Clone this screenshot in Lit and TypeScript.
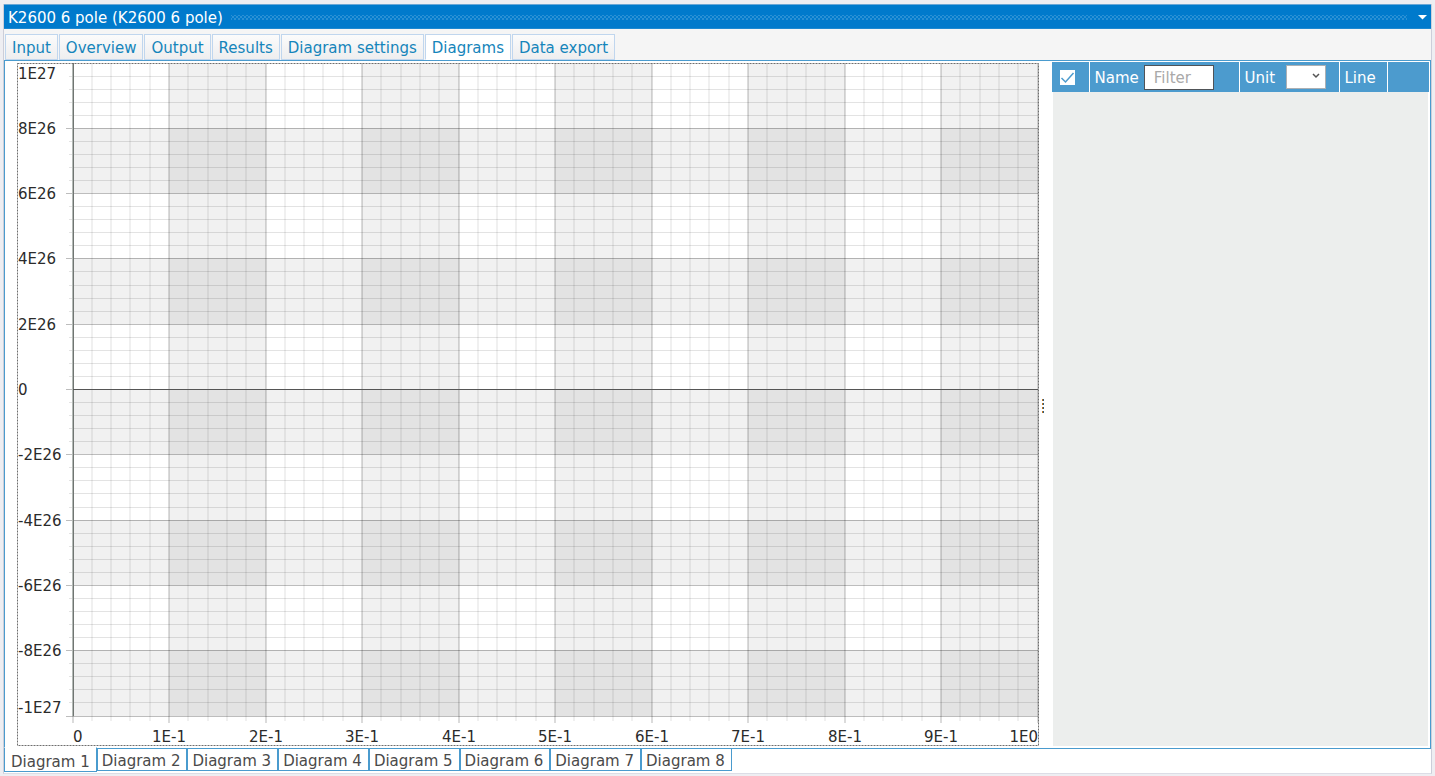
import { LitElement, html, svg, css } from "lit";
import { customElement, state } from "lit/decorators.js";

const FONT = css`"DejaVu Sans", Verdana, sans-serif`;

@customElement("diagram-plot")
class DiagramPlot extends LitElement {
  static styles = css`
    :host { display: block; flex: 1; min-width: 0; min-height: 0; overflow: hidden; }
    svg { display: block; width: 100%; height: 100%; }
    text { font: 15px ${FONT}; fill: #2b2b2b; }
    .band { fill: #000; fill-opacity: 0.055; }
    .minor-x { stroke: #000; stroke-opacity: 0.06; stroke-width: 2; }
    .major-x { stroke: #000; stroke-opacity: 0.14; stroke-width: 2; }
    .minor-y { stroke: #000; stroke-opacity: 0.11; }
    .major-y { stroke: #000; stroke-opacity: 0.26; }
    .axis { stroke: #555; }
    .axis-y { stroke: #707572; }
    .axis-soft { stroke: #b4bab6; }
    .frame { fill: none; stroke: #6e6e6e; stroke-dasharray: 2 1; }
  `;

  @state() private w = 1022;
  @state() private h = 683;
  private observer?: ResizeObserver;

  connectedCallback() {
    super.connectedCallback();
    this.observer = new ResizeObserver(() => this.measure());
    this.observer.observe(this);
  }

  disconnectedCallback() {
    super.disconnectedCallback();
    this.observer?.disconnect();
  }

  firstUpdated() {
    this.measure();
  }

  private measure() {
    if (this.clientWidth && this.clientHeight) {
      this.w = this.clientWidth;
      this.h = this.clientHeight;
    }
  }

  render() {
    const left = 56;
    const right = this.w - 1;
    const top = 0;
    const bottom = this.h - 30;
    const px = (i: number) => Math.floor(left + ((right - left) * i) / 50);
    const py = (i: number) => Math.floor(top + ((bottom - top) * i) / 50);

    const columns = [5, 15, 25, 35, 45].map(
      (i) => svg`<rect class="band" x=${px(i)} y=${top} width=${px(i + 5) - px(i)} height=${bottom - top}></rect>`
    );
    const rows = [5, 15, 25, 35, 45].map(
      (i) => svg`<rect class="band" x=${left} y=${py(i)} width=${right - left} height=${py(i + 5) - py(i)}></rect>`
    );
    const verticals = Array.from({ length: 50 }, (_, k) => k + 1).map((i) => {
      const major = i % 5 === 0;
      return svg`<line class=${major ? "major-x" : "minor-x"} x1=${px(i)} x2=${px(i)} y1=${top} y2=${bottom + (major ? 7 : 5)}></line>`;
    });
    const horizontals = Array.from({ length: 50 }, (_, k) => k + 1).map((i) => {
      const major = i % 5 === 0;
      return svg`<line class=${major ? "major-y" : "minor-y"} x1=${left - (major ? 7 : 4)} x2=${right} y1=${py(i) + 0.5} y2=${py(i) + 0.5}></line>`;
    });

    const yNames = ["1E27", "8E26", "6E26", "4E26", "2E26", "0", "-2E26", "-4E26", "-6E26", "-8E26", "-1E27"];
    const xNames = ["0", "1E-1", "2E-1", "3E-1", "4E-1", "5E-1", "6E-1", "7E-1", "8E-1", "9E-1", "1E0"];
    const yLabels = yNames.map((name, i) => {
      const y = i === 0 ? 16 : i === 10 ? bottom - 3 : py(i * 5) + 6;
      return svg`<text x="1" y=${y}>${name}</text>`;
    });
    const xLabels = xNames.map((name, i) => {
      const anchor = i === 0 ? "start" : i === 10 ? "end" : "middle";
      return svg`<text x=${px(i * 5)} y=${this.h - 4} text-anchor=${anchor}>${name}</text>`;
    });

    return html`
      <svg role="img" aria-label="Diagram 1">
        ${columns}${rows}${verticals}${horizontals}
        <line class="major-x" x1=${left} x2=${left} y1=${bottom} y2=${bottom + 7}></line>
        <line class="axis-soft" x1=${left - 0.5} x2=${left - 0.5} y1=${top} y2=${bottom}></line>
        <line class="axis-y" x1=${left + 0.5} x2=${left + 0.5} y1=${top} y2=${bottom}></line>
        <line class="axis" x1=${left} x2=${right} y1=${py(25) + 0.5} y2=${py(25) + 0.5}></line>
        ${yLabels}${xLabels}
        <rect class="frame" x="0.5" y="0.5" width=${this.w - 1} height=${this.h - 1}></rect>
      </svg>
    `;
  }
}

@customElement("app-root")
class AppRoot extends LitElement {
  static styles = css`
    :host { display: block; height: 100vh; font: 15px/18px ${FONT}; }
    * { box-sizing: border-box; }
    button, input, select { font: inherit; margin: 0; }
    .desk { height: 100%; background: #eeeef2; padding: 4px 3px 2px 3px; }
    .window { height: 100%; display: flex; flex-direction: column; background: #f5f5f5; border: 1px solid #ccced9; border-top: 0; border-bottom-color: #dcdde6; }
    .title { display: flex; align-items: center; gap: 8px; height: 25px; padding: 2px 4px 0 4px; background: #007acc; color: #fff; border-top: 1px solid #6aa7d6; border-bottom: 1px solid #1c88d1; white-space: nowrap; flex: none; }
    .grip { flex: 1; height: 5px; margin-right: 3px; background-image: radial-gradient(circle, #59a8de 0.6px, transparent 0.8px), radial-gradient(circle, #59a8de 0.6px, transparent 0.8px); background-size: 4px 4px; background-position: 0 0, 2px 2px; }
    .drop { border: 0; padding: 0; background: none; display: flex; }
    .tabs { display: flex; gap: 1px; height: 31px; padding: 5px 0 0 1px; flex: none; }
    .tab { height: 26px; border: 1px solid #c0d6ee; background: linear-gradient(#fbfbfb, #eeeeef); color: #1585bb; padding: 2px 6px 0; white-space: nowrap; }
    .tab.active { background: #fff; border-bottom-color: #fff; }
    .body { flex: 1; min-height: 0; display: flex; border: 1px solid #4a9bce; background: #fff; }
    .chart { flex: 1; min-width: 0; display: flex; padding: 2px 0 2px 12px; }
    .splitter { width: 13px; display: flex; align-items: center; padding: 2px 0 0 3px; }
    .dots { display: grid; gap: 2px; }
    .dots i { width: 2px; height: 2px; background: linear-gradient(90deg, #c4741a 50%, #2b5d84 50%); }
    .list { width: 378px; flex: none; display: flex; flex-direction: column; padding: 1px 1px 2px 0; }
    .filler { flex: 1; margin: 0 1px; background: #eceeed; }
    table { width: 100%; border-collapse: collapse; table-layout: fixed; }
    th { height: 30px; padding: 0 0 0 5px; background: #4c9bce; color: #fff; font-weight: normal; text-align: left; border-right: 1px solid #fff; }
    th:last-child { border-right: 0; }
    .c1 { width: 37px; } .c2 { width: 150px; } .c3 { width: 100px; } .c4 { width: 48px; }
    .cell { display: flex; align-items: center; }
    .cell label, .caption { padding-top: 2px; }
    .check { appearance: none; width: 15px; height: 15px; margin-left: 3px; background: #fff; display: block; }
    .mark { position: absolute; pointer-events: none; margin-left: 3px; }
    .filter { width: 70px; height: 25px; margin-left: 5px; padding: 1px 9px 0; border: 1px solid #505357; background: #fff; color: #333; outline: 0; }
    .filter::placeholder { color: #a9a9a9; opacity: 1; }
    .pick { position: relative; display: flex; margin-left: 11px; }
    select { appearance: none; width: 40px; height: 24px; border: 1px solid #acb0b4; border-radius: 0; background: #fff; }
    .pick svg { position: absolute; right: 6px; top: 8px; pointer-events: none; }
    .pages { display: flex; height: 24px; flex: none; background: #fff; }
    .page { height: 23px; border: 1px solid #4a9bce; margin-top: -1px; background: #fff; color: #4a4a4a; padding: 2px 6px 0 4px; white-space: nowrap; }
    .page.active { height: 25px; margin-top: -2px; padding: 4px 6px 0 6px; border-top-color: #fff; z-index: 1; }
  `;

  render() {
    const tabs = ["Input", "Overview", "Output", "Results", "Diagram settings", "Diagrams", "Data export"];
    const pages = [1, 2, 3, 4, 5, 6, 7, 8];
    return html`
      <div class="desk">
        <main class="window">
          <header class="title">
            <span>K2600 6 pole (K2600 6 pole)</span>
            <span class="grip"></span>
            <button class="drop" aria-label="Window menu">
              <svg width="9" height="5" viewBox="0 0 9 5"><path d="M0 0H9L4.5 4.5Z" fill="#fff"></path></svg>
            </button>
          </header>
          <nav class="tabs">
            ${tabs.map((t) => html`<button class="tab ${t === "Diagrams" ? "active" : ""}">${t}</button>`)}
          </nav>
          <section class="body">
            <div class="chart"><diagram-plot></diagram-plot></div>
            <div class="splitter"><div class="dots"><i></i><i></i><i></i><i></i></div></div>
            <div class="list">
              <table>
                <thead>
                  <tr>
                    <th class="c1">
                      <div class="cell">
                        <input class="check" type="checkbox" checked aria-label="Select all" />
                        <svg class="mark" width="15" height="15" viewBox="0 0 15 15"><path d="M1.5 8L5.5 12L13.5 3" fill="none" stroke="#4c9bce" stroke-width="1.5"></path></svg>
                      </div>
                    </th>
                    <th class="c2"><div class="cell"><label for="name">Name</label><input id="name" class="filter" type="text" placeholder="Filter" /></div></th>
                    <th class="c3">
                      <div class="cell">
                        <label for="unit">Unit</label>
                        <span class="pick">
                          <select id="unit"><option></option></select>
                          <svg width="8" height="6" viewBox="0 0 8 6"><path d="M1 1L4 4L7 1" fill="none" stroke="#555" stroke-width="1.5"></path></svg>
                        </span>
                      </div>
                    </th>
                    <th class="c4"><div class="caption">Line</div></th>
                    <th></th>
                  </tr>
                </thead>
              </table>
              <div class="filler"></div>
            </div>
          </section>
          <nav class="pages">
            ${pages.map((n) => html`<button class="page ${n === 1 ? "active" : ""}">Diagram ${n}</button>`)}
          </nav>
        </main>
      </div>
    `;
  }
}
